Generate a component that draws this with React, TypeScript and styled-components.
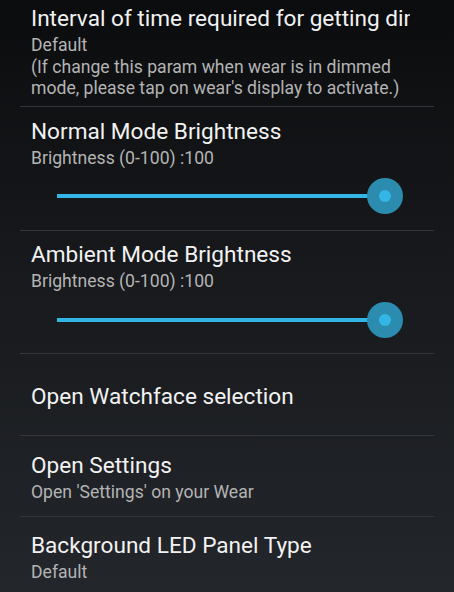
import React from 'react'
import styled, { createGlobalStyle } from 'styled-components'

const GlobalStyle = createGlobalStyle`
  html, body {
    margin: 0;
    padding: 0;
  }
  body {
    width: 454px;
    height: 592px;
    overflow: hidden;
    background: linear-gradient(180deg, #0b0c0e 0%, #17191c 45%, #23262b 100%);
    font-family: Roboto, "Noto Sans", sans-serif;
  }
`

const Screen = styled.div`
  width: 454px;
  height: 592px;
  overflow: hidden;
  display: flex;
  flex-direction: column;
`

const Item = styled.div<{ $top: number; $bottom: number; $last?: boolean }>`
  margin: 0 20px;
  padding: ${(p) => p.$top}px 24px ${(p) => p.$bottom}px 11px;
  border-bottom: ${(p) => (p.$last ? 'none' : '1px solid #34363b')};
  display: flex;
  flex-direction: column;
`

const Title = styled.div`
  color: #f2f2f2;
  font-size: 22.6px;
  line-height: 26px;
  white-space: nowrap;
  overflow: hidden;
`

const Summary = styled.div`
  color: #b4b4b4;
  font-size: 17.6px;
  line-height: 21.5px;
  margin-top: 3px;
`

const SliderRow = styled.div`
  height: 54px;
  position: relative;
  margin: 0 -13px 0 15px;
`

const Track = styled.div`
  position: absolute;
  left: 11px;
  right: 38px;
  top: 25px;
  height: 4px;
  background: #33b5e5;
`

const Thumb = styled.div`
  position: absolute;
  right: 20px;
  top: 9px;
  width: 36px;
  height: 36px;
  border-radius: 50%;
  background: #2b8caf;
  display: flex;
  align-items: center;
  justify-content: center;

  &::after {
    content: '';
    width: 12px;
    height: 12px;
    border-radius: 50%;
    background: #33b5e5;
  }
`

function Slider() {
  return (
    <SliderRow>
      <Track />
      <Thumb />
    </SliderRow>
  )
}

export default function App() {
  return (
    <Screen>
      <GlobalStyle />
      <Item $top={6} $bottom={6}>
        <Title>Interval of time required for getting dimmed</Title>
        <Summary>
          Default
          <br />
          (If change this param when wear is in dimmed
          <br />
          mode, please tap on wear's display to activate.)
        </Summary>
      </Item>
      <Item $top={12} $bottom={7}>
        <Title>Normal Mode Brightness</Title>
        <Summary>Brightness (0-100) :100</Summary>
        <Slider />
      </Item>
      <Item $top={11} $bottom={6}>
        <Title>Ambient Mode Brightness</Title>
        <Summary>Brightness (0-100) :100</Summary>
        <Slider />
      </Item>
      <Item $top={30} $bottom={25}>
        <Title>Open Watchface selection</Title>
      </Item>
      <Item $top={17} $bottom={13}>
        <Title>Open Settings</Title>
        <Summary>Open 'Settings' on your Wear</Summary>
      </Item>
      <Item $top={16} $bottom={14} $last>
        <Title>Background LED Panel Type</Title>
        <Summary>Default</Summary>
      </Item>
    </Screen>
  )
}
